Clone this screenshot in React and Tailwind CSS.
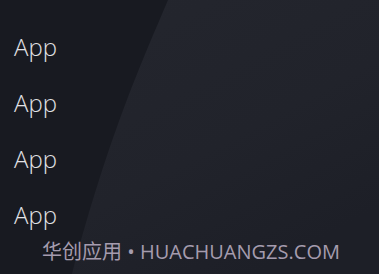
export default function App() {
  const items = ['App', 'App', 'App', 'App'];

  return (
    <div className="relative h-[274px] w-[379px] overflow-hidden bg-[#181a21]">
      {/* soft sheen on the right */}
      <svg className="absolute inset-0" width="379" height="274" viewBox="0 0 379 274">
        <defs>
          <linearGradient id="sheen" x1="0" y1="0" x2="0.6" y2="1">
            <stop offset="0" stopColor="#24262e" />
            <stop offset="0.6" stopColor="#21232b" />
            <stop offset="1" stopColor="#1d1f27" />
          </linearGradient>
        </defs>
        <path d="M168 0 C145 55 110 130 72 274 L379 274 L379 0 Z" fill="url(#sheen)" />
      </svg>

      <div className="relative flex h-full flex-col pt-[19px]" style={{ fontFamily: '"Open Sans", "Noto Sans", sans-serif' }}>
        {items.map((label, i) => (
          <div key={i} className="flex h-14 items-center pl-[14px]">
            <span className="text-[24px] font-light leading-none text-[#e2e2e6]">{label}</span>
          </div>
        ))}
        <div
          className="-mt-px pl-[3px] text-center text-[20px] leading-5 text-[#a59cae]"
          style={{ fontFamily: '"Open Sans", "Noto Sans CJK SC", sans-serif' }}
        >
          华创应用 • HUACHUANGZS.COM
        </div>
      </div>
    </div>
  );
}
